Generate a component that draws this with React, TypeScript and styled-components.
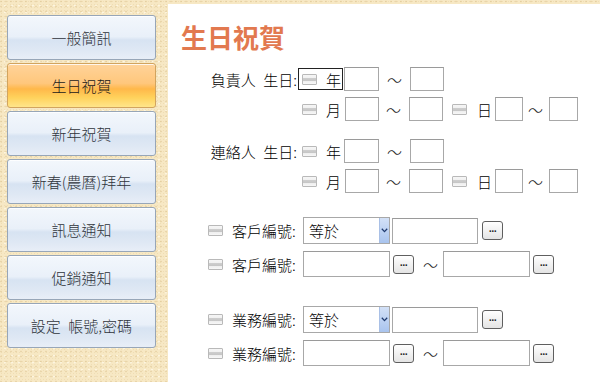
import React from 'react';
import styled, { createGlobalStyle } from 'styled-components';

const GlobalStyle = createGlobalStyle`
  html, body {
    margin: 0;
    padding: 0;
    background: #f7e8c4;
  }
  body {
    font-family: 'Noto Sans CJK TC', 'Noto Sans', sans-serif;
  }
`;

const Page = styled.div`
  width: 600px;
  height: 382px;
  display: flex;
  overflow: hidden;
  background-color: #f7e8c4;
  background-image:
    radial-gradient(circle at 20% 30%, rgba(214, 186, 130, 0.4) 0.6px, transparent 1.2px),
    radial-gradient(circle at 70% 80%, rgba(255, 250, 235, 0.75) 0.6px, transparent 1.2px),
    radial-gradient(circle at 50% 50%, rgba(222, 196, 142, 0.3) 0.5px, transparent 1px);
  background-size: 5px 5px, 7px 7px, 3px 3px;
`;

const Sidebar = styled.nav`
  width: 168px;
  flex-shrink: 0;
  box-sizing: border-box;
  padding: 15px 0 0 7px;
  display: flex;
  flex-direction: column;
  gap: 3px;
`;

const NavButton = styled.div<{ $active?: boolean }>`
  width: 149px;
  height: 45px;
  box-sizing: border-box;
  border-radius: 3px;
  border: 1px solid ${({ $active }) => ($active ? '#d2a45e' : '#97a6b8')};
  background: ${({ $active }) =>
    $active
      ? 'linear-gradient(#ffd39a 0%, #ffc77c 45%, #ffb84a 58%, #ffd25c 78%, #ffe58a 100%)'
      : 'linear-gradient(#f3f7fc 0%, #e9f0f9 48%, #d7e3f2 56%, #dfe8f4 80%, #e8eef7 100%)'};
  box-shadow: inset 0 1px 0 rgba(255, 255, 255, 0.8);
  display: flex;
  align-items: center;
  justify-content: center;
  font-size: 15px;
  font-weight: 300;
  color: ${({ $active }) => ($active ? '#1a1a1a' : '#2f343b')};
  white-space: pre;
`;

const Panel = styled.main`
  flex: 1;
  margin-top: 4px;
  background: #ffffff;
  display: flex;
  flex-direction: column;
`;

const Title = styled.h1`
  margin: 17px 0 0 13px;
  font-size: 26px;
  line-height: 31px;
  font-weight: 700;
  color: #e2794f;
`;

const Row = styled.div<{ $mt: number; $h?: number }>`
  display: flex;
  align-items: center;
  margin-top: ${({ $mt }) => $mt}px;
  height: ${({ $h }) => $h ?? 24}px;
  font-size: 15px;
  font-weight: 300;
  color: #000;
`;

const LabelCell = styled.div`
  width: 130px;
  text-align: right;
  padding-right: 1px;
  box-sizing: border-box;
  white-space: pre;
`;

const FocusWrap = styled.span<{ $focused?: boolean }>`
  display: flex;
  align-items: center;
  height: 20px;
  padding: 0 1px 0 3px;
  border: 1px solid ${({ $focused }) => ($focused ? '#222' : 'transparent')};
`;

const Check = styled.span<{ $ml?: number }>`
  display: inline-block;
  width: 15px;
  height: 11px;
  box-sizing: border-box;
  margin-left: ${({ $ml }) => $ml ?? 0}px;
  border: 1px solid #b9b9b9;
  border-radius: 1px;
  background: linear-gradient(#f6f6f6 0%, #f1f1f1 30%, #cfcfcf 32%, #c6c6c6 62%, #ededed 64%, #f7f7f7 100%);
  flex-shrink: 0;
`;

const Char = styled.span<{ $ml: number }>`
  margin-left: ${({ $ml }) => $ml}px;
  width: 15px;
  text-align: center;
`;

const TextBox = styled.span<{ $w: number; $ml?: number; $h?: number }>`
  display: inline-block;
  box-sizing: border-box;
  width: ${({ $w }) => $w}px;
  height: ${({ $h }) => $h ?? 24}px;
  margin-left: ${({ $ml }) => $ml ?? 0}px;
  border: 1px solid #a8a8a8;
  border-top-color: #9a9a9a;
  background: #fff;
  flex-shrink: 0;
`;

const Tilde = styled.span<{ $ml: number }>`
  margin-left: ${({ $ml }) => $ml}px;
  width: 15px;
  text-align: center;
  font-size: 15px;
  color: #222;
`;

const FieldLabel = styled.span`
  margin-left: 9px;
  width: 71px;
  white-space: nowrap;
`;

const Select = styled.div`
  width: 87px;
  height: 27px;
  box-sizing: border-box;
  border: 1px solid #a8a8a8;
  display: flex;
  align-items: center;
  justify-content: space-between;
  padding-left: 5px;
  font-size: 15px;
  flex-shrink: 0;
`;

const SelectArrow = styled.span`
  width: 10px;
  height: 25px;
  box-sizing: border-box;
  border-left: 1px solid #a9c0e6;
  background: linear-gradient(#d3e1f7, #a9c4ee);
  display: flex;
  align-items: center;
  justify-content: center;
`;

const DotsButton = styled.span<{ $ml: number }>`
  width: 21px;
  height: 19px;
  box-sizing: border-box;
  margin-left: ${({ $ml }) => $ml}px;
  border: 1px solid #5f5f5f;
  border-radius: 3px;
  background: linear-gradient(#ffffff, #e4e4e4);
  display: flex;
  align-items: center;
  justify-content: center;
  font-family: 'DejaVu Sans', sans-serif;
  font-weight: 700;
  font-size: 8px;
  line-height: 1;
  letter-spacing: -0.5px;
  color: #222;
  padding-bottom: 1px;
  flex-shrink: 0;
`;

const Spacer = styled.span`
  width: 40px;
  flex-shrink: 0;
`;

const navItems = ['一般簡訊', '生日祝賀', '新年祝賀', '新春(農曆)拜年', '訊息通知', '促銷通知', '設定\u2002帳號,密碼'];

const Chevron = () => (
  <svg width="7" height="5" viewBox="0 0 7 5">
    <path d="M0.8 0.8 L3.5 3.6 L6.2 0.8" fill="none" stroke="#1f3a6e" strokeWidth="1.3" />
  </svg>
);

const CodeRows: React.FC<{ label: string; mt: number }> = ({ label, mt }) => (
  <>
    <Row $mt={mt} $h={27}>
      <Spacer />
      <Check />
      <FieldLabel>{label}:</FieldLabel>
      <Select>
        等於
        <SelectArrow>
          <Chevron />
        </SelectArrow>
      </Select>
      <TextBox $w={86} $h={26} $ml={2} />
      <DotsButton $ml={4}>...</DotsButton>
    </Row>
    <Row $mt={7} $h={26}>
      <Spacer />
      <Check />
      <FieldLabel>{label}:</FieldLabel>
      <TextBox $w={87} $h={26} />
      <DotsButton $ml={3}>...</DotsButton>
      <Tilde $ml={9}>～</Tilde>
      <TextBox $w={87} $h={26} $ml={5} />
      <DotsButton $ml={3}>...</DotsButton>
    </Row>
  </>
);

const BirthdayRows: React.FC<{ label: string; mt: number; focused?: boolean }> = ({ label, mt, focused }) => (
  <>
    <Row $mt={mt}>
      <LabelCell>{label}{'\u2002'}生日:</LabelCell>
      <FocusWrap $focused={focused}>
        <Check />
        <Char $ml={9}>年</Char>
      </FocusWrap>
      <TextBox $w={35} $ml={1} />
      <Tilde $ml={8}>～</Tilde>
      <TextBox $w={34} $ml={8} />
    </Row>
    <Row $mt={6}>
      <LabelCell />
      <FocusWrap>
        <Check />
        <Char $ml={9}>月</Char>
      </FocusWrap>
      <TextBox $w={34} $ml={2} />
      <Tilde $ml={7}>～</Tilde>
      <TextBox $w={34} $ml={8} />
      <Check $ml={9} />
      <Char $ml={10}>日</Char>
      <TextBox $w={28} $ml={3} />
      <Tilde $ml={5}>～</Tilde>
      <TextBox $w={29} $ml={6} />
    </Row>
  </>
);

export default function App() {
  return (
    <>
      <GlobalStyle />
      <Page>
        <Sidebar>
          {navItems.map((item, i) => (
            <NavButton key={item} $active={i === 1}>
              {item}
            </NavButton>
          ))}
        </Sidebar>
        <Panel>
          <Title>生日祝賀</Title>
          <BirthdayRows label="負責人" mt={15} focused />
          <BirthdayRows label="連絡人" mt={18} />
          <CodeRows label="客戶編號" mt={24} />
          <CodeRows label="業務編號" mt={29} />
        </Panel>
      </Page>
    </>
  );
}
